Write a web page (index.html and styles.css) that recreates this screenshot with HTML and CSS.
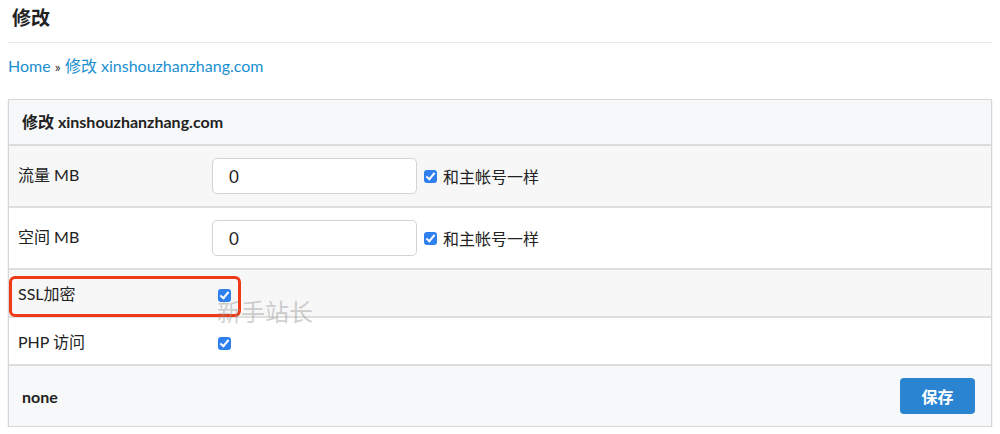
FILE: index.html
```html
<!DOCTYPE html>
<html>
<head>
<meta charset="utf-8">
<link rel="stylesheet" href="styles.css">
</head>
<body>
<div class="page">
  <h1 class="title">修改</h1>
  <div class="crumbs"><a href="#">Home</a> <span class="sep">»</span> <a href="#">修改 xinshouzhanzhang.com</a></div>
  <div class="panel">
    <div class="panel-head">修改 xinshouzhanzhang.com</div>
    <table class="grid">
      <tr class="odd tall">
        <td class="lab">流量 MB</td>
        <td class="val"><div class="field"><input class="inp" type="text" value="0"><label class="chk"><span class="box"></span>和主帐号一样</label></div></td>
      </tr>
      <tr class="tall">
        <td class="lab">空间 MB</td>
        <td class="val"><div class="field"><input class="inp" type="text" value="0"><label class="chk"><span class="box"></span>和主帐号一样</label></div></td>
      </tr>
      <tr class="odd short">
        <td class="lab">SSL加密</td>
        <td class="val"><span class="box solo"></span></td>
      </tr>
      <tr class="short">
        <td class="lab">PHP 访问</td>
        <td class="val"><span class="box solo"></span></td>
      </tr>
    </table>
    <div class="panel-foot">
      <span class="none">none</span>
      <button class="btn">保存</button>
    </div>
    <div class="highlight"></div>
    <div class="watermark">新手站长</div>
  </div>
</div>
</body>
</html>
```
FILE: styles.css
```css
html, body { margin: 0; padding: 0; background: #fff; }
body {
  font-family: Lato, "Noto Sans CJK SC", sans-serif;
  color: #222;
  font-size: 16px;
}
.page { padding: 0 8px; }
.title {
  margin: 0;
  padding: 6px 4px 0;
  height: 36px;
  font-size: 19px;
  font-weight: 700;
  line-height: 24px;
  border-bottom: 1px solid #e6e6e6;
}
.crumbs {
  padding: 13px 0 0;
  height: 43px;
  font-size: 16px;
  line-height: 20px;
  box-sizing: border-box;
}
.crumbs a { color: #1a8fd0; text-decoration: none; }
.sep { color: #333; font-size: 14px; }
.panel {
  position: relative;
  margin-top: 13px;
  border: 1px solid #d6d6d6;
  box-shadow: 0 1px 2px rgba(0,0,0,0.12);
}
.panel-head {
  background: #f7f8f9;
  height: 44px;
  line-height: 44px;
  padding-left: 13px;
  font-weight: 700;
  font-size: 16px;
  border-bottom: 2px solid #dcdcdc;
}
.grid { width: 100%; border-collapse: collapse; table-layout: fixed; }
.grid td { border-bottom: 2px solid #dedede; vertical-align: middle; }
.grid tr.tall td { padding: 12px 0; }
.grid tr.short td { padding: 0; height: 46px; }
.grid tr.odd td { background: #f7f7f8; }
.grid td.lab { width: 203px; box-sizing: border-box; font-size: 16px; }
.grid tr.tall td.lab { padding: 9px 0 14px 9px; }
.grid tr.short td.lab { padding: 0 0 0 9px; }
.field { display: flex; align-items: center; }
.inp {
  width: 205px;
  height: 36px;
  box-sizing: border-box;
  border: 1px solid #d4d4d4;
  border-radius: 5px;
  padding: 0 16px;
  font-family: Lato, sans-serif;
  font-size: 17px;
  color: #222;
  background: #fff;
  margin: 0;
}
.chk { display: flex; align-items: center; margin-left: 7px; font-size: 16px; }
.box {
  display: inline-block;
  width: 13px;
  height: 13px;
  border-radius: 3px;
  background: #2f7fef;
  margin-right: 6px;
  position: relative;
  vertical-align: middle;
}
.box::after {
  content: "";
  position: absolute;
  left: 4px;
  top: 1px;
  width: 3px;
  height: 7px;
  border: solid #fff;
  border-width: 0 2px 2px 0;
  transform: rotate(40deg);
}
.box.solo { margin-left: 6px; }
.panel-foot {
  background: #f7f8f9;
  height: 60px;
  display: flex;
  align-items: center;
  justify-content: space-between;
  padding: 0 16px 0 13px;
}
.none { font-weight: 700; font-size: 16px; }
.btn {
  background: #2a84d2;
  color: #fff;
  border: 0;
  border-radius: 4px;
  width: 75px;
  height: 36px;
  font-family: "Noto Sans CJK SC", sans-serif;
  font-weight: 700;
  font-size: 16px;
}
.highlight {
  position: absolute;
  left: 0;
  top: 176px;
  width: 226px;
  height: 35px;
  border: 3px solid #f03a17;
  border-radius: 6px;
}
.watermark {
  position: absolute;
  left: 208px;
  top: 193px;
  font-size: 24px;
  color: rgba(150,150,150,0.45);
  font-family: "Noto Sans CJK SC", sans-serif;
}
```
